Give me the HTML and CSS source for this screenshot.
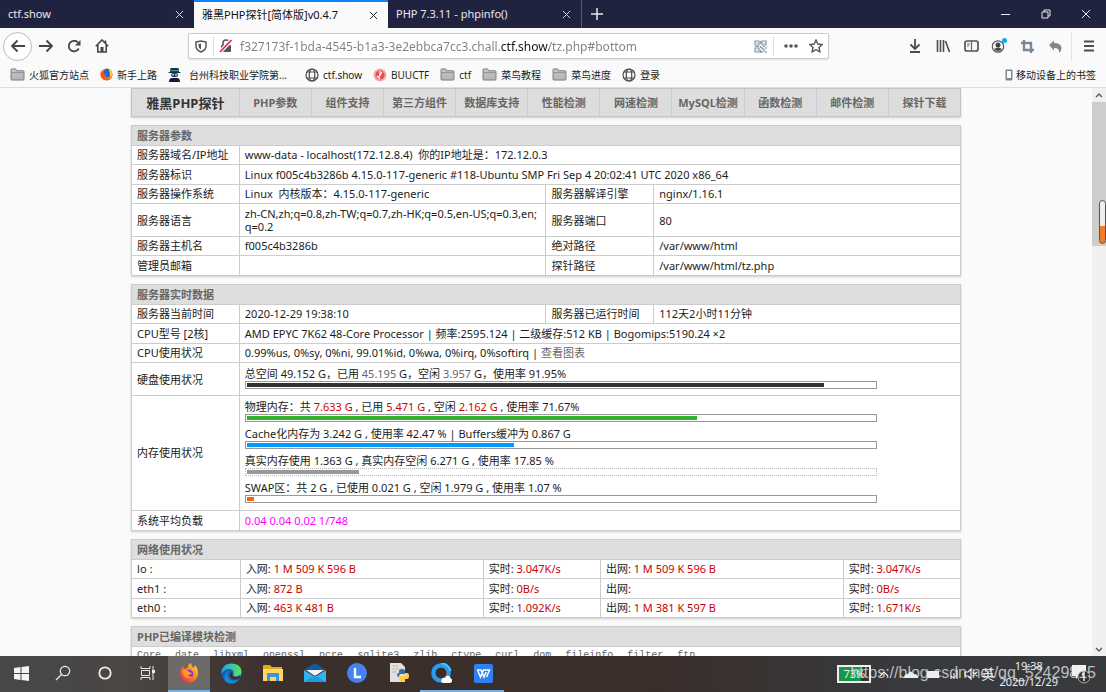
FILE: index.html
```html
<!DOCTYPE html>
<html lang="zh-CN">
<head>
<meta charset="utf-8">
<title>雅黑PHP探针[简体版]v0.4.7</title>
<link rel="stylesheet" href="styles.css">
</head>
<body>
<svg class="defs" aria-hidden="true">
  <defs>
    <linearGradient id="fold" x1="0" y1="0" x2="0" y2="1"><stop offset="0" stop-color="#c9c9c9"/><stop offset="1" stop-color="#b3b3b3"/></linearGradient>
    <linearGradient id="ff" x1="1" y1="0" x2="0" y2="1"><stop offset="0" stop-color="#ffe03a"/><stop offset=".5" stop-color="#ff7a1c"/><stop offset="1" stop-color="#f5156c"/></linearGradient>
    <linearGradient id="edge" x1="0" y1="0" x2="1" y2="0"><stop offset="0" stop-color="#1fa2e8"/><stop offset="1" stop-color="#5ee35a"/></linearGradient>
    <symbol id="x" viewBox="0 0 10 10"><path d="M1 1l8 8M9 1L1 9" stroke="currentColor" fill="none"/></symbol>
    <symbol id="folder" viewBox="0 0 16 14"><path d="M1 12V2q0-1 1-1h4l1 2h7q1 0 1 1v8q0 1-1 1H2q-1 0-1-1z" fill="url(#fold)" stroke="#777"/><path d="M1.500 5h13" stroke="#888"/></symbol>
    <symbol id="globe" viewBox="0 0 14 14"><g fill="none" stroke="#4a4a4a" stroke-width="1.200"><circle cx="7" cy="7" r="6"/><ellipse cx="7" cy="7" rx="2.800" ry="6"/><path d="M2 4h10M2 10h10"/></g></symbol>
    <symbol id="fox" viewBox="0 0 20 20"><path d="M2 6q1-2 2-3l1 3q2-1 4-1-1-3 3-5 0 3 3 5l1-3q3 3 3 8a9 9 0 0 1-18 1Q1 8 2 6z" fill="url(#ff)"/><circle cx="10" cy="11" r="4.300" fill="#7a3ad8"/><path d="M4 7q4-1 6 2l3 1q-1 2-4 2 1 3 5 1-3 4-8 1-3-3-2-7z" fill="#ff9a22"/></symbol>
    <symbol id="foxold" viewBox="0 0 14 14"><circle cx="7" cy="7" r="6.500" fill="#f58a1a"/><circle cx="8" cy="5.500" r="4.600" fill="#2a62c9"/><path d="M1 3q1 3 4 3l2 2q-1 2-3 1 2 4 7 2 2-2 2-5 1 4-2 6-5 3-9-1Q0 8 1 3z" fill="#f4511e"/><path d="M9 1q4 1 4 6-1 4-3 4 2-4-1-10z" fill="#ffd23b"/></symbol>
  </defs>
</svg>

<header class="tabs">
  <div class="tab"><button class="tab-title">ctf.show</button><button class="tab-x" aria-label="关闭"><svg><use href="#x"/></svg></button></div>
  <div class="tab tab-on"><button class="tab-title">雅黑PHP探针[简体版]v0.4.7</button><button class="tab-x" aria-label="关闭"><svg><use href="#x"/></svg></button></div>
  <div class="tab tab-last"><button class="tab-title">PHP 7.3.11 - phpinfo()</button><button class="tab-x" aria-label="关闭"><svg><use href="#x"/></svg></button></div>
  <button class="tab-new" aria-label="新标签页"><svg width="12" height="12" viewBox="0 0 12 12"><path d="M6 0v12M0 6h12" stroke="currentColor" stroke-width="1.500"/></svg></button>
  <div class="win">
    <button aria-label="最小化"><svg width="10" height="10" viewBox="0 0 10 10"><path d="M0 5.500h9" stroke="currentColor"/></svg></button>
    <button aria-label="还原"><svg width="10" height="10" viewBox="0 0 10 10"><path d="M1 3h6v6H1zM3 3V1h6v6H7" fill="none" stroke="currentColor"/></svg></button>
    <button aria-label="关闭窗口"><svg width="10" height="10"><use href="#x"/></svg></button>
  </div>
</header>

<nav class="bar">
  <button class="back" aria-label="后退"><svg width="16" height="14" viewBox="0 0 16 14"><path d="M15 7H2M7.500 1.500L2 7l5.500 5.500" fill="none" stroke="currentColor" stroke-width="1.800"/></svg></button>
  <button class="ic" aria-label="前进"><svg width="16" height="14" viewBox="0 0 16 14"><path d="M1 7h13M8.500 1.500L14 7l-5.500 5.500" fill="none" stroke="currentColor" stroke-width="1.800"/></svg></button>
  <button class="ic" aria-label="刷新"><svg width="14" height="14" viewBox="0 0 14 14"><path d="M11.800 9.500A5.300 5.300 0 1 1 11 3.500" fill="none" stroke="currentColor" stroke-width="1.800"/><path d="M13.500 1v5.500H8z" fill="currentColor"/></svg></button>
  <button class="ic" aria-label="主页"><svg width="14" height="14" viewBox="0 0 14 14"><path d="M.8 7.200L7 1l6.200 6.200M2.800 6v7h8.400V6M10.500 4V1.500" fill="none" stroke="currentColor" stroke-width="1.600"/><path d="M5.500 8h3v5h-3z" fill="currentColor"/></svg></button>
  <div class="url">
    <svg class="shield" width="12" height="13" viewBox="0 0 12 13"><path d="M1 2l5-1 5 1v4q0 4-5 6-5-2-5-6z" fill="none" stroke="#555" stroke-width="1.500"/><path d="M6 3.500v6Q3.500 8 3.500 6V4z" fill="#555"/></svg>
    <span class="lock"><svg width="14" height="14" viewBox="0 0 14 14"><path d="M4 6V4a3 3 0 0 1 6 0v2" fill="none" stroke="#555" stroke-width="1.600"/><rect x="2" y="6" width="10" height="7" rx="1" fill="#555"/><path d="M1 13L12.500 1" stroke="#fff" stroke-width="4"/><path d="M1 13L12.500 1" stroke="#e22850" stroke-width="1.800"/></svg></span>
    <input class="address" type="text" aria-label="地址" value="f327173f-1bda-4545-b1a3-3e2ebbca7cc3.chall.ctf.show/tz.php#bottom">
    <svg width="13" height="13" viewBox="0 0 13 13"><g fill="none" stroke="#8793a0" stroke-width="1.200"><path d="M1 1h4v4H1zM8 1h4v4H8zM1 8h4v4H1z"/><path d="M8 7v2h2v3M12 7v2M8 11v2M12 11v2M6.500 1v3M6.500 6v2M1 6.500h4M6.500 10v3M9 6.500h2"/></g><path d="M2.500 2.500h1v1h-1zM9.500 2.500h1v1h-1zM2.500 9.500h1v1h-1z" fill="#8793a0"/></svg>
    <button class="dots" aria-label="页面操作"><svg width="14" height="4" viewBox="0 0 14 4"><g fill="#555"><circle cx="2" cy="2" r="1.800"/><circle cx="7" cy="2" r="1.800"/><circle cx="12" cy="2" r="1.800"/></g></svg></button>
    <button class="star" aria-label="收藏"><svg width="14" height="14" viewBox="0 0 14 14"><path d="M7 1l1.900 4 4.300.5-3.200 3 .9 4.400L7 10.700l-3.900 2.200.9-4.400-3.200-3L5.100 5z" fill="none" stroke="#555" stroke-width="1.400"/></svg></button>
  </div>
  <div class="tools">
    <button aria-label="下载"><svg width="14" height="14" viewBox="0 0 14 14"><path d="M7 0v10M2.500 5.500L7 10l4.500-4.500M2 13h10" fill="none" stroke="#4d4d4d" stroke-width="1.800"/></svg></button>
    <button aria-label="书库"><svg width="14" height="14" viewBox="0 0 14 14"><path d="M1.500 1v12M4.500 1v12M7.500 1v12M9.500 2l4 11" fill="none" stroke="#4d4d4d" stroke-width="1.600"/></svg></button>
    <button aria-label="侧栏"><svg width="15" height="14" viewBox="0 0 15 14"><rect x="1" y="2" width="13" height="10" rx="2" fill="none" stroke="#555" stroke-width="1.700"/><path d="M7.500 2v10M3 5h3M3 7h2" stroke="#666" stroke-width="1.200"/></svg></button>
    <button aria-label="账户"><svg width="16" height="16" viewBox="0 0 16 16"><circle cx="7" cy="8.500" r="5.700" fill="none" stroke="#555" stroke-width="1.200"/><circle cx="7" cy="7" r="2.500" fill="#444"/><path d="M3 11q4-3 8 0-4 4-8 0z" fill="#444"/><circle cx="13.500" cy="2.500" r="2.500" fill="#00b3f4"/></svg></button>
    <button aria-label="截图"><svg width="13" height="13" viewBox="0 0 13 13"><path d="M3 0v10h10M0 3h10v10" fill="none" stroke="#7c8794" stroke-width="2.400"/></svg></button>
    <button aria-label="撤销"><svg width="13" height="13" viewBox="0 0 13 13"><path d="M0 5l5-4.500V3q7 0 7.500 5 0 3-2.500 5 1-5-5-5v2.500z" fill="#7c8794"/></svg></button>
    <button class="menu" aria-label="菜单"><svg width="12" height="12" viewBox="0 0 12 12"><path d="M1 1.500h10M1 6h10M1 10.500h10" stroke="#4d4d4d" stroke-width="1.800"/></svg></button>
  </div>
</nav>

<nav class="marks">
  <a href="#"><svg width="15" height="13"><use href="#folder"/></svg>火狐官方站点</a>
  <a href="#"><svg width="13" height="13"><use href="#foxold"/></svg>新手上路</a>
  <a href="#" class="school"><svg width="13" height="14" viewBox="0 0 13 14"><path d="M2.500 0h8l.5 4H2z" fill="#222e48"/><path d="M2.500 2h8v1.200h-8z" fill="#2aa39a"/><path d="M.5 4h12v1H.5z" fill="#222e48"/><rect x="3" y="5" width="7" height="4" rx="2" fill="#303a4e"/><path d="M4 6.800h2M7 6.800h2" stroke="#fff"/><path d="M1 14q0-4 3-4h5q3 0 3 4z" fill="#111c3d"/></svg>台州科技职业学院第...</a>
  <a href="#"><svg width="14" height="14"><use href="#globe"/></svg>ctf.show</a>
  <a href="#"><svg width="14" height="14" viewBox="0 0 14 14"><circle cx="7" cy="7" r="6.500" fill="#f7a6a6"/><circle cx="7" cy="7" r="4.500" fill="#e94b50"/><path d="M4 8l3 3M7 3v5M9 4L6 9" stroke="#fff" stroke-width="1.200"/></svg>BUUCTF</a>
  <a href="#"><svg width="15" height="13"><use href="#folder"/></svg>ctf</a>
  <a href="#"><svg width="15" height="13"><use href="#folder"/></svg>菜鸟教程</a>
  <a href="#"><svg width="15" height="13"><use href="#folder"/></svg>菜鸟进度</a>
  <a href="#"><svg width="14" height="14"><use href="#globe"/></svg>登录</a>
  <a href="#" class="mobile"><svg width="8" height="12" viewBox="0 0 8 12"><rect x=".5" y=".5" width="7" height="11" rx="1" fill="#7c8794"/><path d="M2 2h4v7H2z" fill="#fff"/></svg>移动设备上的书签</a>
</nav>

<div class="view">
  <div class="pane">
  <main class="page">
    <nav class="menu-row">
      <a class="brand" href="#">雅黑PHP探针</a><a href="#">PHP参数</a><a href="#">组件支持</a><a href="#">第三方组件</a><a href="#">数据库支持</a><a href="#">性能检测</a><a href="#">网速检测</a><a href="#">MySQL检测</a><a href="#">函数检测</a><a href="#">邮件检测</a><a href="#">探针下载</a>
    </nav>

    <table class="info">
      <colgroup><col class="k"><col class="v"><col class="k"><col class="v"></colgroup>
      <tr><th colspan="4">服务器参数</th></tr>
      <tr><td>服务器域名/IP地址</td><td colspan="3">www-data - localhost(172.12.8.4)&nbsp; 你的IP地址是：172.12.0.3</td></tr>
      <tr><td>服务器标识</td><td colspan="3">Linux f005c4b3286b 4.15.0-117-generic #118-Ubuntu SMP Fri Sep 4 20:02:41 UTC 2020 x86_64</td></tr>
      <tr><td>服务器操作系统</td><td>Linux&nbsp; 内核版本：4.15.0-117-generic</td><td>服务器解译引擎</td><td>nginx/1.16.1</td></tr>
      <tr class="tall"><td>服务器语言</td><td>zh-CN,zh;q=0.8,zh-TW;q=0.7,zh-HK;q=0.5,en-US;q=0.3,en;<br>q=0.2</td><td>服务器端口</td><td>80</td></tr>
      <tr><td>服务器主机名</td><td>f005c4b3286b</td><td>绝对路径</td><td>/var/www/html</td></tr>
      <tr><td>管理员邮箱</td><td></td><td>探针路径</td><td>/var/www/html/tz.php</td></tr>
    </table>

    <table class="info">
      <colgroup><col class="k"><col class="v"><col class="k"><col class="v"></colgroup>
      <tr><th colspan="4">服务器实时数据</th></tr>
      <tr><td>服务器当前时间</td><td>2020-12-29 19:38:10</td><td>服务器已运行时间</td><td>112天2小时11分钟</td></tr>
      <tr><td>CPU型号 [2核]</td><td colspan="3">AMD EPYC 7K62 48-Core Processor | 频率:2595.124 | 二级缓存:512 KB | Bogomips:5190.24 ×2</td></tr>
      <tr><td>CPU使用状况</td><td colspan="3">0.99%us, 0%sy, 0%ni, 99.01%id, 0%wa, 0%irq, 0%softirq | <a class="chart" href="#">查看图表</a></td></tr>
      <tr class="tall"><td>硬盘使用状况</td><td colspan="3">
        <div class="use"><p>总空间 49.152 G，已用 <span class="dim">45.195</span> G，空闲 <span class="dim">3.957</span> G，使用率 91.95%</p><div class="meter"><i class="disk" style="width:91.95%"></i></div></div>
      </td></tr>
      <tr class="memory"><td>内存使用状况</td><td colspan="3">
        <div class="use"><p>物理内存：共 <b>7.633 G</b> , 已用 <b>5.471 G</b> , 空闲 <b>2.162 G</b> , 使用率 71.67%</p><div class="meter"><i class="phys" style="width:71.67%"></i></div></div>
        <div class="use"><p>Cache化内存为 3.242 G , 使用率 42.47 % | Buffers缓冲为 0.867 G</p><div class="meter"><i class="cache" style="width:42.47%"></i></div></div>
        <div class="use"><p>真实内存使用 1.363 G , 真实内存空闲 6.271 G , 使用率 17.85 %</p><div class="meter dotted"><i class="real" style="width:17.85%"></i></div></div>
        <div class="use"><p>SWAP区：共 2 G , 已使用 0.021 G , 空闲 1.979 G , 使用率 1.07 %</p><div class="meter"><i class="swap" style="width:1.07%"></i></div></div>
      </td></tr>
      <tr><td>系统平均负载</td><td colspan="3" class="load">0.04 0.04 0.02 1/748</td></tr>
    </table>

    <table class="info">
      <colgroup><col class="n1"><col class="n2"><col class="n3"><col class="n2"><col class="n3"></colgroup>
      <tr><th colspan="5">网络使用状况</th></tr>
      <tr><td>lo :</td><td>入网: <b>1 M 509 K 596 B</b></td><td>实时: <b>3.047K/s</b></td><td>出网: <b>1 M 509 K 596 B</b></td><td>实时: <b>3.047K/s</b></td></tr>
      <tr><td>eth1 :</td><td>入网: <b>872 B</b></td><td>实时: <b>0B/s</b></td><td>出网:</td><td>实时: <b>0B/s</b></td></tr>
      <tr><td>eth0 :</td><td>入网: <b>463 K 481 B</b></td><td>实时: <b>1.092K/s</b></td><td>出网: <b>1 M 381 K 597 B</b></td><td>实时: <b>1.671K/s</b></td></tr>
    </table>

    <table class="info">
      <tr><th>PHP已编译模块检测</th></tr>
      <tr><td><div class="mods"><span>Core</span><span>date</span><span>libxml</span><span>openssl</span><span>pcre</span><span>sqlite3</span><span>zlib</span><span>ctype</span><span>curl</span><span>dom</span><span>fileinfo</span><span>filter</span><span>ftp</span></div></td></tr>
    </table>
  </main>
  </div>
  <div class="scroll">
    <button aria-label="向上滚动"><svg width="8" height="5" viewBox="0 0 8 5"><path d="M1 4l3-3 3 3" fill="none" stroke="#555" stroke-width="1.300"/></svg></button>
    <div class="track"><div class="thumb"></div><div class="pill"></div></div>
    <button aria-label="向下滚动"><svg width="8" height="5" viewBox="0 0 8 5"><path d="M1 1l3 3 3-3" fill="none" stroke="#555" stroke-width="1.300"/></svg></button>
  </div>
</div>

<footer class="task">
  <button aria-label="开始"><svg width="15" height="15" viewBox="0 0 15 15"><path d="M0 2l6.500-1v6H0zM7.500 1L15 0v7H7.500zM0 8h6.500v6L0 13zM7.500 8H15v7l-7.500-1z" fill="#f4f4f4"/></svg></button>
  <button aria-label="搜索"><svg width="16" height="16" viewBox="0 0 16 16"><circle cx="10" cy="6" r="4.700" fill="none" stroke="#eee" stroke-width="1.200"/><path d="M6.500 9.500L1 15" stroke="#eee" stroke-width="1.300"/></svg></button>
  <button aria-label="Cortana"><svg width="14" height="14" viewBox="0 0 14 14"><circle cx="7" cy="7" r="5.700" fill="none" stroke="#eee" stroke-width="1.800"/></svg></button>
  <button aria-label="任务视图"><svg width="15" height="14" viewBox="0 0 15 14"><path d="M1 0v2.500h9V0M1.500 4.500h8v5h-8zM1 14v-2.500h9V14M13 0v14" fill="none" stroke="#e6e6e6"/><path d="M12 4h3v3h-3z" fill="#eee"/></svg></button>
  <button class="on run" aria-label="Firefox"><svg width="20" height="20"><use href="#fox"/></svg></button>
  <button aria-label="Edge"><svg width="21" height="21" viewBox="0 0 21 21"><circle cx="10.500" cy="10.500" r="10" fill="#0c64b8"/><path d="M.5 11Q0 1 10 .5q10 0 10.500 8 0 5-5 5-4 0-3-3Q13 6 8 6 3 6 .5 11z" fill="url(#edge)"/><path d="M8 8q-4 6 2 9 4 2 8-1-4 6-11 4-5-3-3-8 2-4 4-4z" fill="#1787d8"/><path d="M12 10q-2 4 3 4 2 0 4-2v3q-4 3-8 1-4-3-1-7z" fill="#3b3230"/></svg></button>
  <button aria-label="文件资源管理器"><svg width="20" height="17" viewBox="0 0 20 17"><path d="M0 1q0-1 1-1h6l2 2h10v14H0z" fill="#e8a916"/><path d="M0 4h20v12H0z" fill="#ffd767"/><path d="M4 16V9q0-1 1-1h10q1 0 1 1v7h-3v-4H7v4z" fill="#3c96dc"/></svg></button>
  <button aria-label="邮件"><svg width="22" height="20" viewBox="0 0 22 20"><path d="M0 7l11-7 11 7z" fill="#0b5ba8"/><path d="M0 7l11 7 11-7v12H0z" fill="#32b4ee"/><path d="M2 7h18l-9 6z" fill="#f3f3f3"/><path d="M0 19l11-7 11 7z" fill="#1f9de0"/></svg></button>
  <button aria-label="L"><svg width="20" height="20" viewBox="0 0 20 20"><circle cx="10" cy="10" r="10" fill="#4782f5"/><path d="M8 5v9h6" fill="none" stroke="#fff" stroke-width="2.400"/></svg></button>
  <button aria-label="Python"><svg width="20" height="20" viewBox="0 0 20 20"><path d="M1 0h11l4 4v15H1z" fill="#e4e1dc"/><path d="M3 3h6M3 6h7M3 9h5" stroke="#bbb"/><path d="M10 10V8q0-2 3-2t3 2v3h-4q-2 0-2 3-2 0-2-2t2-2z" fill="#3470a4"/><path d="M16 10h2q2 0 2 3t-2 3h-2v1q0 2-3 2t-3-2v-2q0-2 2-2h4z" fill="#ffd044"/></svg></button>
  <button class="run" aria-label="QQ浏览器"><svg width="21" height="21" viewBox="0 0 21 21"><circle cx="10" cy="10" r="7.800" fill="#fff" stroke="#249cf5" stroke-width="4"/><path d="M10 .2a10 10 0 0 1 9.500 8" fill="none" stroke="#45c8ff" stroke-width="2"/><circle cx="10" cy="10" r="5.800" fill="#392d2a"/><path d="M12 20q-3-1-1-4 1-2 3-1 2-4 5-1 1 1 1 2 3 0 1 3l-2 1z" fill="#fff"/></svg></button>
  <button class="run" aria-label="WPS"><svg width="19" height="19" viewBox="0 0 19 19"><rect width="19" height="19" rx="2" fill="#2f80f2"/><path d="M3 6h4l3 7 2-5M3.500 6l3 7 3-7h6l-3 7" fill="none" stroke="#fff" stroke-width="1.500"/></svg></button>
  <div class="tray">
    <span class="battery">73%</span>
    <svg class="signs" width="112" height="14" viewBox="0 0 112 14"><g fill="none" stroke="#eee" stroke-width="1.200"><path d="M1 9l4-4 4 4M72 12V9M75 12V6M78 12V3M86 5h3l3-3v10l-3-3h-3zM94 5l4 4M98 5l-4 4"/></g><path d="M25 11q0-4 4-4 2-5 6 0 4 0 4 4zM48 4h12v7H48z" fill="#eee"/></svg>
    <span class="ime">英</span>
    <time class="clock">19:38<br>2020/12/29</time>
    <svg width="18" height="20" viewBox="0 0 18 20"><path d="M0 1h14v11H7l-3 3v-3H0z" fill="#f2f2f2"/><circle cx="12" cy="13" r="6" fill="#333" stroke="#aaa"/><path d="M10 11l2-2v8" fill="none" stroke="#fff" stroke-width="1.300"/></svg>
    <span class="mark">https://blog.csdn.net/qq_52429815</span>
  </div>
</footer>
</body>
</html>
```
FILE: styles.css
```css
* { box-sizing: border-box; }
html, body { height: 100%; }
body {
  margin: 0;
  display: flex;
  flex-direction: column;
  overflow: hidden;
  background: #fafafa;
  color: #1c1c1c;
  font: 11px/14px "Noto Sans", "Noto Sans CJK SC", sans-serif;
}
button {
  display: flex;
  align-items: center;
  justify-content: center;
  border: 0;
  padding: 0;
  background: none;
  color: inherit;
  font: inherit;
}
a { color: inherit; text-decoration: none; }
p { margin: 0; }
b { font-weight: 400; color: #cc0000; }
svg { flex: none; display: block; }
.defs { position: absolute; width: 0; height: 0; }

/* tab strip */
.tabs { display: flex; flex: none; height: 28px; background: #202340; color: #e8e8ee; }
.tab { display: flex; align-items: center; width: 194px; padding: 0 8px; }
.tab-title { flex: 1; justify-content: flex-start; white-space: nowrap; }
.tab-x svg { width: 9px; height: 9px; margin-right: 2px; }
.tab-on { background: #fafafa; color: #111; border-top: 2px solid #0a84ff; }
.tab-last { border-right: 1px solid #555870; }
.tab-new { width: 30px; }
.win { display: flex; margin-left: auto; }
.win button { width: 40px; }

/* navigation bar */
.bar { display: flex; flex: none; align-items: center; height: 36px; padding-left: 3px; color: #454545; }
.back { width: 29px; height: 29px; border: 1px solid #bbb; border-radius: 50%; background: #fff; }
.ic { width: 28px; height: 28px; }
.url {
  display: flex;
  flex: 1;
  align-items: center;
  height: 26px;
  margin-left: 72px;
  border: 1px solid #ccc;
  border-radius: 2px;
  background: #fff;
  box-shadow: 0 1px 2px #ddd;
}
.shield { margin: 0 6px; }
.lock { margin-right: 7px; border-left: 1px solid #ddd; padding: 2px 0 2px 5px; }
.address {
  flex: 1;
  min-width: 0;
  height: 22px;
  border: 0;
  padding: 0;
  outline: 0;
  font: 12px "Noto Sans", sans-serif;
  color: #808080;
  background: linear-gradient(to right, #808080 261px, #111 261px, #111 309px, #808080 309px);
  -webkit-background-clip: text;
  background-clip: text;
  -webkit-text-fill-color: transparent;
}
.dots { width: 30px; height: 18px; margin-left: 6px; border-left: 1px solid #ddd; padding-left: 5px; }
.star { width: 25px; }
.tools { display: flex; align-items: center; margin-left: 72px; }
.tools button { width: 28px; height: 29px; }
.tools .menu { width: 35px; margin-left: 2px; border-left: 1px solid #e2e2e2; }

/* bookmarks */
.marks { display: flex; flex: none; align-items: center; gap: 11px; height: 24px; padding: 0 10px 2px; border-bottom: 1px solid #ddd; white-space: nowrap; font-size: 10px; }
.marks a { display: flex; align-items: center; gap: 4px; }
.marks .school { gap: 8px; margin-right: 7px; }
.marks .mobile { gap: 3px; margin-left: auto; }

/* page */
.view { display: flex; flex: 1; min-height: 0; overflow: hidden; }
.pane { flex: 1; min-width: 0; }
.page { width: 76%; margin: 0 auto; }
.menu-row { display: flex; height: 29px; margin-bottom: 8px; border: 1px solid #c4c4c4; background: #ddd; color: #666; font-weight: 700; box-shadow: 0 1px 2px #ccc; }
.menu-row a { flex: 1 0 0; display: flex; align-items: center; justify-content: center; border-left: 1px solid #ccc; white-space: nowrap; }
.menu-row .brand { flex: 1.5 0 0; border-left: 0; color: #333; font-size: 13px; }
.info { width: 100%; table-layout: fixed; border-collapse: collapse; margin-bottom: 8px; background: #fff; border: 1px solid #ccc; box-shadow: 0 1px 2px #ccc; }
.info tr { height: 19px; }
.info tr:nth-child(odd) { height: 20px; }
.info tr.tall { height: 33px; }
.info tr.memory { height: 115px; }
.info th, .info td { padding: 0 5px; border: 1px solid #ccc; text-align: left; vertical-align: middle; white-space: nowrap; }
.info th { background: #dedede; color: #666; }
.info .tall td { line-height: 13px; }
.k { width: 13%; }
.v { width: 37%; }
.n1 { width: 13%; }
.n2 { width: 29%; }
.n3 { width: 14%; }
.chart, .dim { color: #666; }
.load { color: #ff00ff; }
.use { width: 89%; height: 27px; }
.use p { line-height: 15px; }
.meter { height: 8px; border: 1px solid #999; padding: 1px; background: #fff; }
.meter i { display: block; height: 4px; }
.dotted { border: 1px dotted #bbb; }
.disk { background: #333; }
.phys { background: #33b22c; }
.cache { background: #0099ff; }
.real { background: #999; }
.swap { background: #ff6600; }
.mods { display: flex; gap: 14px; color: #666; font: 10px/14px "Liberation Mono", monospace; }

/* scrollbar */
.scroll { display: flex; flex-direction: column; flex: none; width: 14px; background: #f0f0f0; }
.scroll button { height: 14px; }
.track { position: relative; flex: 1; }
.thumb { height: 144px; background: #cdcdcd; }
.pill { position: absolute; top: 98px; right: 0; width: 7px; height: 44px; border: 1px solid #555; border-radius: 4px; background: linear-gradient(#eee 60%, #f47b20 60%); }

/* taskbar */
.task { display: flex; flex: none; height: 36px; background: linear-gradient(to right, #46484a, #4a4643 12%, #3b2f2c 25%, #3a2e2b 60%, #38393c 80%, #383a3c); color: #eee; }
.task > button { width: 42px; border-bottom: 2px solid transparent; }
.task > button.on { background: #6c6a69; }
.task > button.run { border-bottom-color: #6fb3ea; }
.tray { position: relative; display: flex; align-items: center; margin-left: auto; padding-right: 16px; }
.battery { width: 34px; height: 18px; border: 2px solid #eee; padding-left: 4px; background: linear-gradient(to right, #16984a 72%, #333 72%); }
.signs { margin-left: 8px; }
.ime { margin: 0 5px 0 -10px; font-size: 13px; }
.clock { margin-right: 14px; text-align: center; font-size: 11px; line-height: 16px; }
.mark { position: absolute; right: 10px; bottom: 10px; font: 16px/18px "Liberation Sans", sans-serif; color: rgba(235, 235, 235, .75); white-space: nowrap; }
```
